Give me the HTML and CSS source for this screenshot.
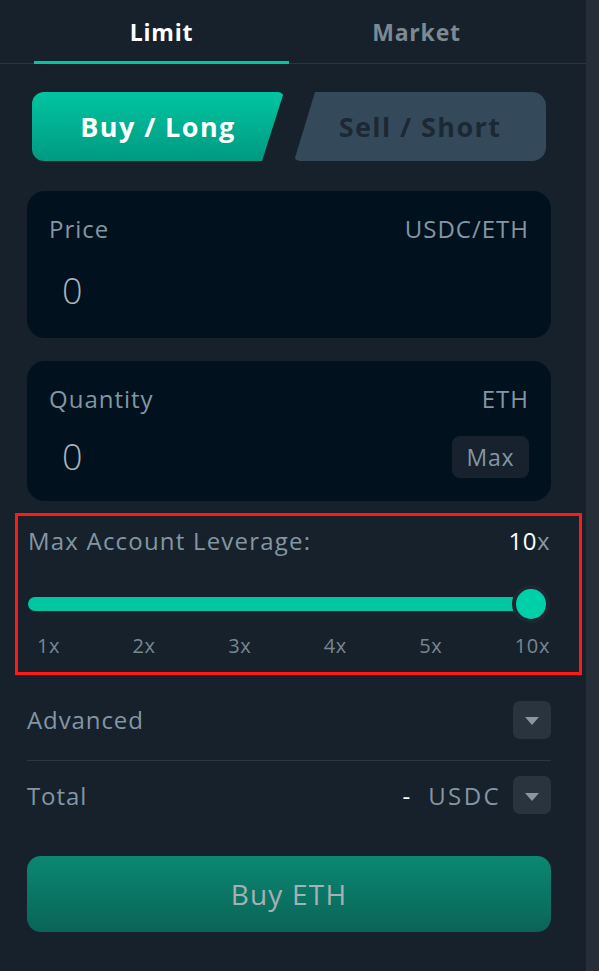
FILE: index.html
```html
<!DOCTYPE html>
<html>
<head>
<meta charset="utf-8">
<link rel="stylesheet" href="styles.css">
</head>
<body>
<div class="app">
  <div class="panel">
    <div class="tabs">
      <div class="tab active">Limit</div>
      <div class="tab">Market</div>
    </div>
    <div class="content">
      <div class="sides">
        <div class="side buy">Buy / Long</div>
        <div class="side sell">Sell / Short</div>
      </div>

      <div class="card price-card">
        <div class="card-head"><span>Price</span><span>USDC/ETH</span></div>
        <div class="card-value">0</div>
      </div>

      <div class="card qty-card">
        <div class="card-head"><span>Quantity</span><span>ETH</span></div>
        <div class="card-row">
          <div class="card-value">0</div>
          <div class="max-btn">Max</div>
        </div>
      </div>

      <div class="leverage">
        <div class="lev-head">
          <span>Max Account Leverage:</span>
          <span class="lev-val"><span class="white">10</span>x</span>
        </div>
        <div class="slider">
          <div class="track"></div>
          <div class="thumb"></div>
        </div>
        <div class="ticks">
          <span>1x</span><span>2x</span><span>3x</span><span>4x</span><span>5x</span><span>10x</span>
        </div>
      </div>

      <div class="row advanced">
        <span>Advanced</span>
        <div class="dd"><span class="tri"></span></div>
      </div>
      <div class="row total">
        <span>Total</span>
        <div class="total-right">
          <span class="dash">-</span>
          <span class="unit">USDC</span>
          <div class="dd"><span class="tri"></span></div>
        </div>
      </div>

      <div class="submit">Buy ETH</div>
    </div>
  </div>
  <div class="scrollbar"></div>
</div>
</body>
</html>
```

FILE: styles.css
```css
* { box-sizing: border-box; }
html, body { margin: 0; padding: 0; }
body {
  background: #16212c;
  font-family: "Open Sans", "Liberation Sans", sans-serif;
  color: #8496a3;
}
.app {
  display: flex;
  width: 599px;
  height: 971px;
  overflow: hidden;
}
.panel {
  flex: 1;
  background: #16212c;
}
.scrollbar {
  width: 13px;
  background: #262e37;
}
.tabs {
  display: flex;
  padding: 0 42px 0 34px;
  border-bottom: 1px solid #2b3540;
  height: 64px;
}
.tab {
  flex: 1;
  text-align: center;
  font-weight: 700;
  font-size: 23px;
  letter-spacing: 0.8px;
  line-height: 64px;
  color: #7e8a93;
  height: 64px;
}
.tab.active {
  color: #ffffff;
  border-bottom: 3px solid #00c9a0;
}
.content {
  padding: 28px 35px 0 27px;
}
.sides {
  display: flex;
  gap: 10px;
  padding: 0 5px;
  height: 69px;
}
.side {
  flex: 1;
  display: flex;
  align-items: center;
  justify-content: center;
  font-weight: 700;
  font-size: 27px;
  letter-spacing: 1.4px;
}
.buy {
  background: linear-gradient(#00c5a0, #009a82);
  color: #ffffff;
  border-radius: 12px 6px 6px 12px;
  clip-path: polygon(0 0, 100% 0, calc(100% - 22px) 100%, 0 100%);
}
.sell {
  background: #344a5a;
  color: #1c2833;
  border-radius: 6px 14px 14px 6px;
  clip-path: polygon(21px 0, 100% 0, 100% 100%, 0 100%);
}
.card {
  background: #01111d;
  border-radius: 18px;
  padding: 22px 22px 0 22px;
}
.price-card {
  margin-top: 30px;
  height: 147px;
}
.qty-card {
  margin-top: 23px;
  height: 140px;
}
.card-head {
  display: flex;
  justify-content: space-between;
  font-size: 24px;
  letter-spacing: 1px;
  line-height: 32px;
}
.card-value {
  font-size: 36px;
  font-weight: 300;
  color: #a9b4bc;
  padding-left: 13px;
  line-height: 40px;
}
.price-card .card-value { margin-top: 26px; }
.card-row {
  display: flex;
  justify-content: space-between;
  align-items: center;
  margin-top: 21px;
}
.max-btn {
  background: #17222e;
  border-radius: 8px;
  width: 77px;
  height: 42px;
  display: flex;
  align-items: center;
  justify-content: center;
  font-size: 23px;
  letter-spacing: 0.8px;
}
.leverage {
  margin: 12px -31px 0 -12px;
  border: 3px solid #ff1a1a;
  height: 162px;
  padding: 8px 29px 0 10px;
}
.lev-head {
  display: flex;
  justify-content: space-between;
  font-size: 24px;
  letter-spacing: 1.2px;
  line-height: 34px;
}
.lev-val { letter-spacing: 0.5px; }
.white { color: #ffffff; }
.slider {
  position: relative;
  height: 38px;
  margin-top: 27px;
}
.track {
  position: absolute;
  left: 0;
  right: 10px;
  top: 12px;
  height: 14px;
  border-radius: 7px;
  background: #00c6a2;
}
.thumb {
  position: absolute;
  right: 0;
  top: 0;
  width: 38px;
  height: 38px;
  border-radius: 50%;
  background: #00d0a8;
  border: 4px solid #1c2731;
}
.ticks {
  display: flex;
  justify-content: space-between;
  padding-left: 9px;
  font-size: 20px;
  letter-spacing: 0.6px;
  color: #788792;
  margin-top: 9px;
}
.row {
  display: flex;
  justify-content: space-between;
  align-items: center;
  font-size: 24px;
  letter-spacing: 0.9px;
}
.advanced {
  height: 86px;
  border-bottom: 1px solid #2a3744;
  padding-top: 4px;
}
.total {
  height: 68px;
}
.total-right {
  display: flex;
  align-items: center;
}
.dash {
  color: #ffffff;
  margin-right: 17px;
}
.unit {
  margin-right: 12px;
  letter-spacing: 2.4px;
}
.dd {
  width: 38px;
  height: 38px;
  border-radius: 7px;
  background: #29343e;
  display: flex;
  align-items: center;
  justify-content: center;
  padding-top: 3px;
}
.tri {
  width: 0;
  height: 0;
  border-left: 7px solid transparent;
  border-right: 7px solid transparent;
  border-top: 8px solid #8d969d;
}
.submit {
  margin-top: 27px;
  height: 76px;
  border-radius: 14px;
  background: linear-gradient(#0b8872, #0a6457);
  display: flex;
  align-items: center;
  justify-content: center;
  font-size: 28px;
  letter-spacing: 1.2px;
  color: #a6b0b5;
}
```
